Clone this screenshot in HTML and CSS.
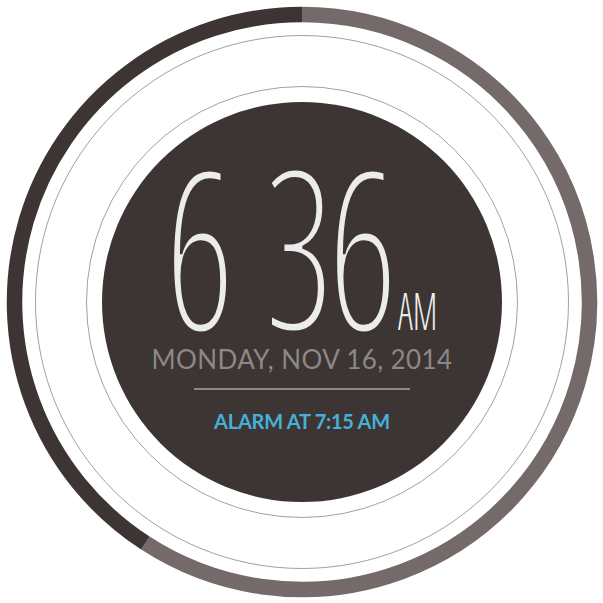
FILE: index.html
```html
<!DOCTYPE html>
<html>
<head>
<meta charset="utf-8">
<link rel="stylesheet" href="styles.css">
</head>
<body>
<div class="clock">
  <svg class="rings" width="603" height="603" viewBox="0 0 603 603" aria-hidden="true">
    <circle class="guide" cx="302" cy="302" r="266.5"/>
    <circle class="guide" cx="302" cy="302" r="215.5"/>
    <path class="arc arc-rest" d="M302 14.5 A287.5 287.5 0 1 1 145.4 543.1"/>
    <path class="arc arc-done" d="M145.4 543.1 A287.5 287.5 0 0 1 302 14.5"/>
  </svg>
  <div class="face">
    <div class="time">
      <span class="hours"><span class="digit six">6</span></span>
      <span class="minutes"><span class="digit">3</span><span class="digit six">6</span></span>
      <span class="meridiem"><span class="ampm">AM</span></span>
    </div>
    <div class="date">MONDAY, NOV 16, 2014</div>
    <div class="rule"></div>
    <div class="alarm">ALARM AT 7:15 AM</div>
  </div>
</div>
</body>
</html>
```
FILE: styles.css
```css
html, body {
  margin: 0;
  padding: 0;
  background: #ffffff;
}

.clock {
  position: relative;
  width: 603px;
  height: 603px;
  box-sizing: border-box;
  padding: 102px 0 0 102px;
}

.rings {
  position: absolute;
  left: 0;
  top: 0;
}

.guide {
  fill: none;
  stroke: #7d7776;
  stroke-width: 0.7;
}

.arc {
  fill: none;
  stroke-width: 15.5;
  stroke-linecap: butt;
}

.arc-rest { stroke: #736a69; }
.arc-done { stroke: #3c3533; }

.face {
  position: relative;
  width: 400px;
  height: 400px;
  border-radius: 50%;
  background: #3c3533;
  display: flex;
  flex-direction: column;
  align-items: center;
  box-sizing: border-box;
  padding-top: 62px;
}

.time {
  display: flex;
  align-items: baseline;
  align-self: flex-start;
  padding-left: 60.5px;
}

.digit {
  display: inline-block;
  width: 70px;
  text-align: center;
  font-family: "Open Sans", sans-serif;
  font-stretch: 75%;
  font-weight: 300;
  font-size: 222px;
  line-height: 160px;
  color: #ececec;
  -webkit-text-stroke: 3px #3c3533;
  transform: scaleX(0.77);
}

.digit.six {
  transform: translateX(-6px) scaleX(0.77);
}

.hours {
  display: flex;
  margin-right: 23px;
}

.minutes {
  display: flex;
}

.meridiem {
  display: inline-block;
  width: 40px;
  margin-left: 2.5px;
}

.ampm {
  display: inline-block;
  font-family: "Open Sans", sans-serif;
  font-stretch: 75%;
  font-weight: 300;
  font-size: 52px;
  line-height: 34px;
  color: #ececec;
  transform: scaleX(0.7);
  transform-origin: left center;
}

.date {
  margin-top: 12px;
  font-family: Lato, sans-serif;
  font-weight: 400;
  font-size: 26px;
  line-height: 26px;
  letter-spacing: 0.4px;
  color: #8c8888;
  white-space: nowrap;
}

.rule {
  margin-top: 16px;
  width: 216px;
  height: 1.5px;
  background: #8b8786;
}

.alarm {
  margin-top: 21px;
  font-family: Lato, sans-serif;
  font-weight: 700;
  font-size: 20px;
  line-height: 20px;
  letter-spacing: -0.25px;
  color: #45b1db;
  white-space: nowrap;
}
```
